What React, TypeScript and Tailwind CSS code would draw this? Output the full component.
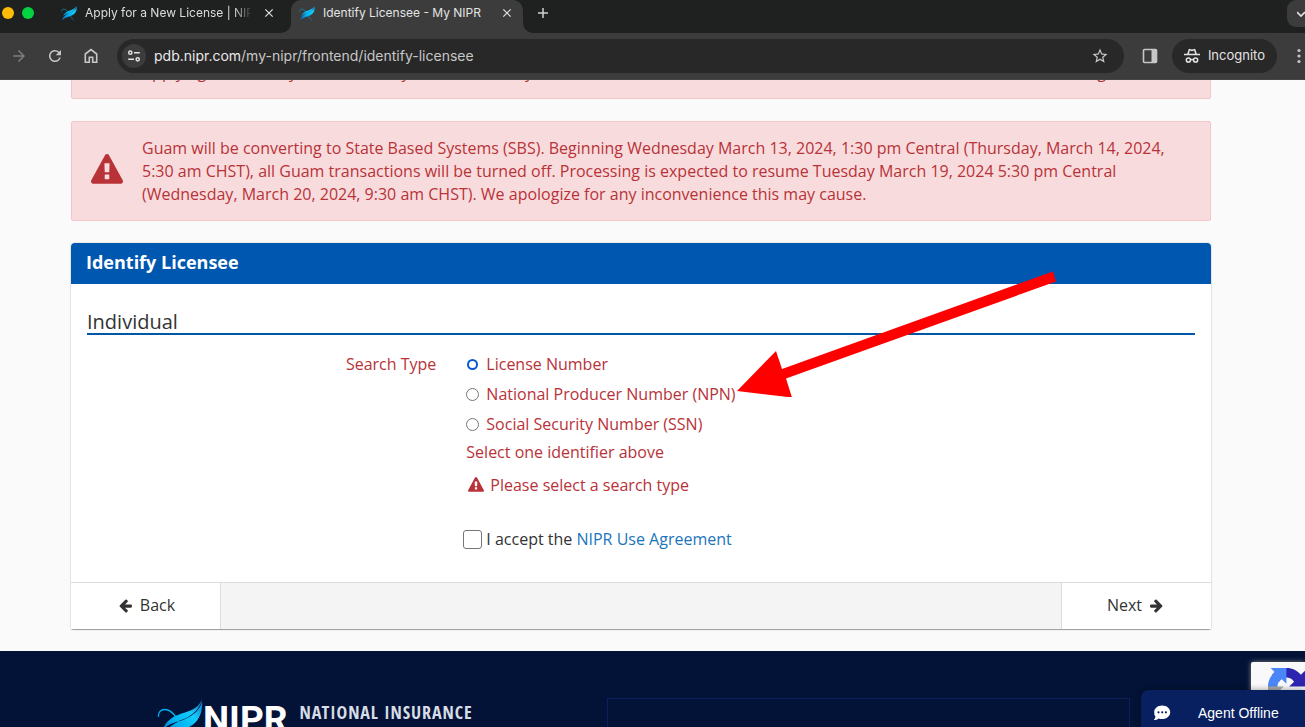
import type { ReactNode } from "react";
import { MdArrowForward, MdClose, MdOutlineStarBorder, MdRefresh } from "react-icons/md";

function Feather({ className, id }: { className: string; id: string }) {
  return (
    <svg viewBox="0 0 48 48" className={className} aria-hidden="true">
      <defs>
        <linearGradient id={id} gradientUnits="userSpaceOnUse" x1="2" y1="40" x2="46" y2="2">
          <stop offset="0" stopColor="#0b5fc0" />
          <stop offset="0.4" stopColor="#00b4f0" />
          <stop offset="0.7" stopColor="#12ccff" />
          <stop offset="1" stopColor="#1470b8" />
        </linearGradient>
      </defs>
      <path
        d="M45 1C42 9 36 12 28 14.500 18 17.500 10 21 6 31c7-6 14-7 21-10C36 17 43 11 45 1Z"
        fill={`url(#${id})`}
      />
      <path
        d="M45 3c1 11-3 21-13 26C23 34 12 34 2 44 8 29 18 25 27 21.500 37 17 43 12 45 3Z"
        fill={`url(#${id})`}
      />
      <path
        d="M1.500 19C1 15 3.500 11 8.500 11.500 15 12 19 19 23 26s8 13 13 17"
        fill="none"
        stroke={`url(#${id})`}
        strokeWidth="1.4"
      />
    </svg>
  );
}

function WarningIcon({ className }: { className: string }) {
  return (
    <svg viewBox="0 0 1792 1792" className={className} fill="currentColor" aria-hidden="true">
      <path d="M1024 1375v-190q0-14-9.5-23.5t-22.5-9.5h-192q-13 0-22.5 9.5t-9.5 23.5v190q0 14 9.5 23.5t22.5 9.5h192q13 0 22.5-9.5t9.5-23.5zm-2-374l18-459q0-12-10-19-13-11-24-11h-220q-11 0-24 11-10 7-10 21l17 457q0 10 10 16.5t24 6.5h185q14 0 23.5-6.5t10.5-16.5zm-14-934l768 1408q35 63-2 126-17 29-46.5 46t-63.5 17h-1536q-34 0-63.5-17t-46.5-46q-37-63-2-126l768-1408q17-31 47-49t65-18 65 18 47 49z" />
    </svg>
  );
}

function ArrowIcon({ className }: { className: string }) {
  return (
    <svg viewBox="0 0 1792 1792" className={className} fill="currentColor" aria-hidden="true">
      <path d="M1664 896v128q0 53-32.5 90.5t-84.5 37.5h-704l293 294q38 36 38 90t-38 90l-75 76q-37 37-90 37-52 0-91-37l-651-652q-37-37-37-90 0-52 37-91l651-650q38-38 91-38 52 0 90 38l75 74q38 38 38 91t-38 91l-293 293h704q52 0 84.5 37.5t32.5 90.5z" />
    </svg>
  );
}

function TabCurve({ className }: { className: string }) {
  return (
    <svg viewBox="0 0 10 10" className={className} fill="#3c3c3c" aria-hidden="true">
      <path d="M10 0v10H0A10 10 0 0 0 10 0Z" />
    </svg>
  );
}

function BrowserBar() {
  return (
    <header className="relative z-10 shrink-0 overflow-hidden font-['Inter',sans-serif] text-[#e3e3e3]">
      <div className="flex h-[33px] items-start bg-[#1f2120]">
        <div className="flex h-[26px] items-center gap-2 pl-[2px]">
          <span className="size-3 rounded-full bg-[#febc0a]" />
          <span className="size-3 rounded-full bg-[#02d441]" />
        </div>
        <div className="flex h-[26px] w-[257px] items-center pr-[15px] pl-[27px] text-xs">
          <Feather id="feather-tab-one" className="mr-[7px] size-[17px] shrink-0" />
          <span className="flex-1 overflow-hidden whitespace-nowrap text-[#dcdcdc] [mask-image:linear-gradient(to_right,black_148px,transparent_168px)]">
            Apply for a New License | NIPR
          </span>
          <button type="button" aria-label="Close tab" className="ml-3">
            <MdClose className="size-3.5" />
          </button>
        </div>
        <div className="relative flex h-[33px] w-[232px] items-start rounded-t-[10px] bg-[#3c3c3c] pr-[9px] pl-2 text-xs">
          <TabCurve className="absolute bottom-0 -left-2.5 size-2.5" />
          <TabCurve className="absolute -right-2.5 bottom-0 size-2.5 -scale-x-100" />
          <div className="flex h-[26px] flex-1 items-center">
            <Feather id="feather-tab-two" className="mr-[7px] size-[17px] shrink-0" />
            <span className="flex-1 whitespace-nowrap">Identify Licensee - My NIPR</span>
            <button type="button" aria-label="Close tab">
              <MdClose className="size-3.5" />
            </button>
          </div>
        </div>
        <button type="button" aria-label="New tab" className="ml-3.5 flex h-[26px] items-center">
          <svg viewBox="0 0 12 12" className="size-3" stroke="#d0d0d0" strokeWidth="1.5" aria-hidden="true">
            <path d="M6 1v10M1 6h10" />
          </svg>
        </button>
        <button
          type="button"
          aria-label="Search tabs"
          className="ml-auto flex h-[27px] w-[18px] items-center justify-end rounded-l-[9px] bg-[#3c3c3c]"
        >
          <svg viewBox="0 0 8 8" className="size-2" fill="none" stroke="#e3e3e3" strokeWidth="1.6" aria-hidden="true">
            <path d="m0 2 4 4 4-4" />
          </svg>
        </button>
      </div>
      <div className="flex h-[47px] items-center border-b border-[#454545] bg-[#3c3c3c] pl-2.5 text-[#c7c7c7]">
        <button type="button" aria-label="Forward" className="text-[#7d7d7d]">
          <MdArrowForward className="size-[18px]" />
        </button>
        <button type="button" aria-label="Reload" className="ml-[18px]">
          <MdRefresh className="size-[18px]" />
        </button>
        <button type="button" aria-label="Home" className="ml-[18px]">
          <svg viewBox="0 0 18 18" className="size-[18px]" fill="none" stroke="currentColor" strokeWidth="1.6" aria-hidden="true">
            <path d="M3.3 15.2V7L9 2.6 14.700 7v8.200h-4V10.300H7.300v4.900Z" />
          </svg>
        </button>
        <div className="ml-[17px] flex h-[34px] flex-1 items-center rounded-full bg-[#282828] pr-[15px] pl-[5px]">
          <button
            type="button"
            aria-label="Site information"
            className="flex size-6 items-center justify-center rounded-full bg-[#3c3c3c] text-[#e3e3e3]"
          >
            <svg viewBox="0 0 14 14" className="size-3.5" fill="none" stroke="currentColor" strokeWidth="1.5" aria-hidden="true">
              <circle cx="3.300" cy="3.700" r="1.600" />
              <path d="M7 3.700h5.800M1.200 10.300H7" />
              <circle cx="10.700" cy="10.300" r="1.600" />
            </svg>
          </button>
          <div className="ml-2 flex-1 text-sm whitespace-nowrap">
            <span className="text-[#e8e8e8]">pdb.nipr.com</span>
            /my-nipr/frontend/identify-licensee
          </div>
          <button type="button" aria-label="Bookmark this page">
            <MdOutlineStarBorder className="size-[18px]" />
          </button>
        </div>
        <button type="button" aria-label="Side panel" className="ml-[18px]">
          <svg viewBox="0 0 16 16" className="size-4" aria-hidden="true">
            <rect x="1.500" y="1.500" width="13" height="13" rx="1" fill="none" stroke="currentColor" strokeWidth="1.600" />
            <path d="M9.500 1.500h5v13h-5Z" fill="currentColor" />
          </svg>
        </button>
        <div className="ml-3.5 flex h-[34px] items-center gap-2 rounded-full bg-[#282828] px-3 text-[13px] text-[#e3e3e3]">
          <svg viewBox="0 0 16 16" className="size-4" aria-hidden="true">
            <path
              d="M3.200 5.700 4.600 1.500c.2-.6.7-.8 1.200-.6L8 1.600l2.200-.7c.5-.2 1 0 1.200.6l1.400 4.200H16v1.600H0V5.700Zm1.700 0h6.200l-1-3.100L8 3.300l-2.100-.7Z"
              fill="currentColor"
              fillRule="evenodd"
            />
            <g fill="none" stroke="currentColor" strokeWidth="1.500">
              <circle cx="4.400" cy="12" r="2.100" />
              <circle cx="11.600" cy="12" r="2.100" />
              <path d="M6.500 11.800q1.500-.8 3 0" />
            </g>
          </svg>
          Incognito
        </div>
        <button type="button" aria-label="Menu" className="mr-[4px] ml-5">
          <svg viewBox="0 0 4 16" className="h-4 w-1" fill="currentColor" aria-hidden="true">
            <circle cx="2" cy="2.500" r="1.600" />
            <circle cx="2" cy="8" r="1.600" />
            <circle cx="2" cy="13.500" r="1.600" />
          </svg>
        </button>
      </div>
    </header>
  );
}

function Alert({ children }: { children: ReactNode }) {
  return (
    <div
      role="alert"
      className="flex min-h-[100px] items-center rounded-xs border border-[#f3c4ca] bg-[#f8dcdd] pt-[15px] pr-5 pb-3.5 pl-[19px] leading-[23px] text-[#b83238]"
    >
      <WarningIcon className="mr-[19px] mb-1 w-8 shrink-0" />
      <p className="self-end">{children}</p>
    </div>
  );
}

const searchTypes = ["License Number", "National Producer Number (NPN)", "Social Security Number (SSN)"];

function IdentifyCard() {
  return (
    <form className="relative mt-[22px] rounded-t-sm rounded-b-xs bg-white shadow-[0_1px_1px_rgba(0,0,0,0.35),0_0_2px_rgba(0,0,0,0.2)]">
      <h1 className="rounded-t-sm bg-[#0057b0] px-[15px] pt-1.5 pb-2 text-lg leading-[27px] font-bold text-white">
        Identify Licensee
      </h1>
      <div className="px-4 pt-[26px] pb-[30px]">
        <h2 className="border-b-2 border-[#0057a8] text-xl leading-[23px] text-[#333]">Individual</h2>
        <div className="mt-3.5 flex text-[#b83238]">
          <span id="search-type" className="w-1/3 pr-5 text-right leading-[30px]">
            Search Type
          </span>
          <div role="radiogroup" aria-labelledby="search-type" className="pl-2.5">
            {searchTypes.map((label, index) => (
              <label key={label} className="flex h-[30px] items-center gap-[7px]">
                <input
                  type="radio"
                  name="search-type"
                  defaultChecked={index === 0}
                  className="size-[13px] appearance-none rounded-full border border-[#767676] bg-white checked:mx-px checked:size-[11px] checked:border-2 checked:border-[#0b57d0]"
                />
                {label}
              </label>
            ))}
            <p className="leading-[26px]">Select one identifier above</p>
            <p className="mt-[7px] flex items-center gap-1.5 pl-0.5 leading-[26px]">
              <WarningIcon className="size-4" />
              Please select a search type
            </p>
          </div>
        </div>
        <div className="mt-7 flex text-[#333]">
          <div className="w-1/3" />
          <div className="flex items-center gap-1 pl-[7px] leading-[26px]">
            <input
              id="accept"
              type="checkbox"
              className="size-[19px] appearance-none rounded-[3px] border border-[#767676] bg-white"
            />
            <label htmlFor="accept">
              I accept the{" "}
              <a href="#use-agreement" className="text-[#1b75bb]">
                NIPR Use Agreement
              </a>
            </label>
          </div>
        </div>
      </div>
      <div className="flex h-[47px] justify-between border-t border-[#ddd] bg-[#f4f4f4] text-[#333]">
        <button type="button" className="flex w-[150px] items-center justify-center gap-[7px] border-r border-[#ddd] bg-white pb-0.5 pl-0.5">
          <ArrowIcon className="size-[15px]" />
          Back
        </button>
        <button type="button" className="flex w-[150px] items-center justify-center gap-[7px] border-l border-[#ddd] bg-white pr-0.5 pb-0.5">
          Next
          <ArrowIcon className="size-[15px] -scale-x-100" />
        </button>
      </div>
      <svg
        viewBox="0 0 320 126"
        className="pointer-events-none absolute top-7 left-[666px] h-[126px] w-[320px]"
        fill="#ff0000"
        aria-hidden="true"
      >
        <path d="m0 120 39-40 6 18L316 .500l3 10L49 107.500l6 19Z" />
      </svg>
    </form>
  );
}

function Recaptcha() {
  return (
    <div className="absolute right-0 bottom-0 h-[65px] w-[54px] rounded-l-[2px] bg-[#f9f9f9] pt-1.5 pl-[17px] shadow-[0_0_5px_gray]">
      <svg viewBox="0 0 64 64" className="size-[37px]" aria-hidden="true">
        <path
          fill="#2d25b0"
          d="M64 31.955l-.033-1.37V4.687l-7.16 7.16C50.948 4.674 42.033.093 32.05.093c-10.4 0-19.622 4.96-25.458 12.64l11.736 11.86a15.55 15.55 0 0 1 4.754-5.334c2.05-1.6 4.952-2.906 8.968-2.906.485 0 .86.057 1.135.163 4.976.393 9.288 3.14 11.828 7.124l-8.307 8.307L64 31.953"
        />
        <path
          fill="#4a86f7"
          d="M31.862.094l-1.37.033H4.594l7.16 7.16C4.58 13.147 0 22.06 0 32.046c0 10.4 4.96 19.622 12.64 25.458L24.5 45.768a15.55 15.55 0 0 1-5.334-4.754c-1.6-2.05-2.906-4.952-2.906-8.968 0-.485.057-.86.163-1.135.393-4.976 3.14-9.288 7.124-11.828l8.307 8.307L31.86.095"
        />
        <path
          fill="#ababab"
          d="M.001 32.045l.033 1.37v25.898l7.16-7.16c5.86 7.173 14.774 11.754 24.76 11.754 10.4 0 19.622-4.96 25.458-12.64l-11.736-11.86a15.55 15.55 0 0 1-4.754 5.334c-2.05 1.6-4.952 2.906-8.968 2.906-.485 0-.86-.057-1.135-.163-4.976-.393-9.288-3.14-11.828-7.124l8.307-8.307c-10.522.04-22.4.066-27.295-.005"
        />
      </svg>
    </div>
  );
}

function ChatButton() {
  return (
    <button
      type="button"
      className="absolute right-0 bottom-0 flex h-[37px] w-[164px] items-center rounded-tl-lg bg-[#082060] pt-2 pb-0 pl-3 font-['Liberation_Sans',sans-serif] text-sm text-white shadow-[0_0_6px_rgba(0,0,0,0.4)]"
    >
      <svg viewBox="0 0 18 16" className="mr-[27px] h-4 w-[18px]" aria-hidden="true">
        <path
          d="M9.200.500c4.600 0 8 2.900 8 6.700s-3.400 6.800-8 6.800c-1.300 0-2.500-.2-3.500-.6-1.300 1-2.900 1.700-4.900 1.700 1-1.100 1.600-2.300 1.700-3.500A6.300 6.300 0 0 1 1.200 7.200C1.200 3.400 4.600.500 9.200.500Z"
          fill="#fff"
        />
        <g fill="#082060">
          <circle cx="5.500" cy="7.300" r="1.100" />
          <circle cx="9.200" cy="7.300" r="1.100" />
          <circle cx="12.900" cy="7.300" r="1.100" />
        </g>
      </svg>
      Agent Offline
    </button>
  );
}

export default function App() {
  return (
    <div className="relative flex h-screen flex-col overflow-hidden bg-[#fafafa] font-['Open_Sans',sans-serif] text-base">
      <BrowserBar />
      <main className="shrink-0 pr-[23px]">
        <div className="mx-auto -mt-[81px] max-w-[1140px] pb-[22px]">
          <Alert>
            Applying for a facility in the territory is not necessary at this time. Other transactions will continue
            until the closure date is nearing
          </Alert>
          <div className="mt-[22px]">
            <Alert>
              Guam will be converting to State Based Systems (SBS). Beginning Wednesday March 13, 2024, 1:30 pm Central
              (Thursday, March 14, 2024, 5:30 am CHST), all Guam transactions will be turned off. Processing is expected
              to resume Tuesday March 19, 2024 5:30 pm Central (Wednesday, March 20, 2024, 9:30 am CHST). We apologize
              for any inconvenience this may cause.
            </Alert>
          </div>
          <IdentifyCard />
        </div>
      </main>
      <footer className="flex-1 overflow-hidden bg-[#031337] pr-[23px]">
        <div className="mx-auto flex max-w-[978px] items-start justify-between pt-[47px]">
          <div className="flex items-start pl-[5px] text-white">
            <Feather id="feather-footer" className="-mr-0.5 size-12" />
            <span className="font-['Roboto',sans-serif] text-[37px] leading-[44px] font-bold">NIPR</span>
            <span className="ml-3 pt-1 font-['Liberation_Sans_Narrow','Open_Sans_Condensed',sans-serif] text-lg leading-[21px] font-light tracking-wider text-[#d8dce6]">
              NATIONAL INSURANCE
              <br />
              PRODUCER REGISTRY
            </span>
          </div>
          <div className="h-[120px] w-[523px] border border-[#0a1f5c]" />
        </div>
      </footer>
      <Recaptcha />
      <ChatButton />
    </div>
  );
}
